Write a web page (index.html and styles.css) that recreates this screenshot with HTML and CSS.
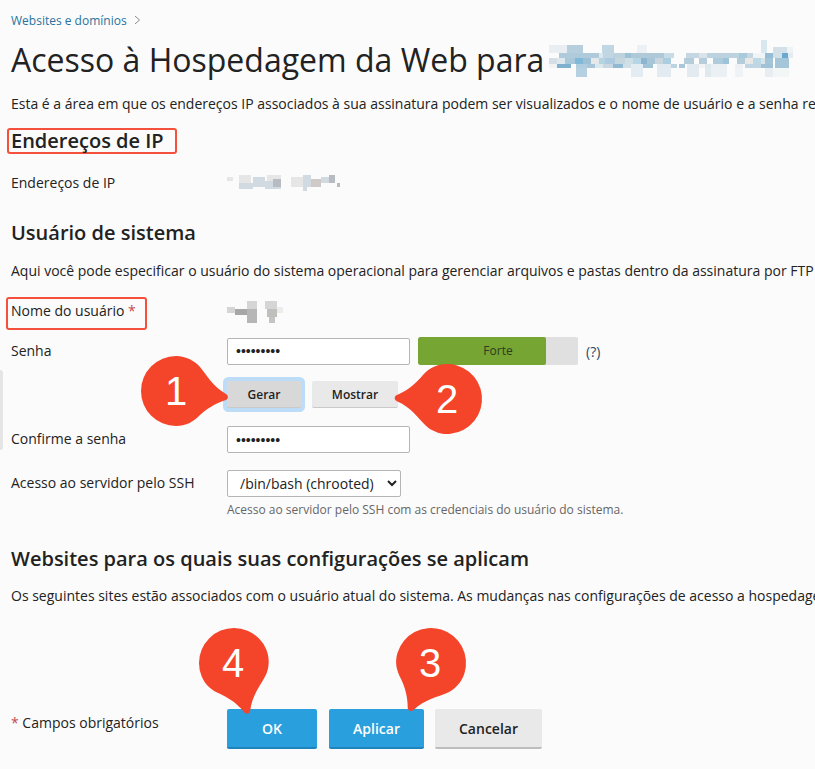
FILE: index.html
```html
<!DOCTYPE html>
<html lang="pt">
<head>
  <meta charset="UTF-8">
  <meta name="viewport" content="width=device-width, initial-scale=1">
  <title>Acesso à Hospedagem da Web</title>
  <link rel="stylesheet" href="styles.css">
</head>
<body>
  <div class="page">
    <div class="side-handle"></div>

    <nav class="breadcrumb"><a href="#">Websites e domínios</a>
      <svg class="crumb-arrow" width="7" height="10" viewBox="0 0 7 10"><path d="M1 1l4.5 4L1 9" fill="none" stroke="#8a8a8a"/></svg>
    </nav>

    <h1 class="page-title">Acesso à Hospedagem da Web para
      <svg class="mosaic-title" width="246" height="38" viewBox="0 -1 246 38" shape-rendering="crispEdges">
        <!-- dominio borrado -->
        <rect x="212" y="0" width="6" height="5" fill="#d9e8ef"/>
        <rect x="0" y="5" width="18" height="8" fill="#e8eef2"/><rect x="18" y="5" width="16" height="8" fill="#b7cfdc"/><rect x="53" y="5" width="12" height="8" fill="#c0d6e2"/><rect x="88" y="5" width="10" height="8" fill="#eef1f4"/><rect x="212" y="5" width="6" height="8" fill="#d9e8ef"/><rect x="224" y="7" width="14" height="6" fill="#d3e0e8"/><rect x="238" y="7" width="6" height="6" fill="#eef3f6"/>
        <rect x="10" y="13" width="40" height="5" fill="#afcbdb"/><rect x="50" y="13" width="4" height="5" fill="#dce8ee"/><rect x="54" y="13" width="10" height="5" fill="#c0d6e2"/><rect x="64" y="13" width="12" height="5" fill="#bed2dd"/><rect x="76" y="13" width="6" height="5" fill="#9cc2d8"/><rect x="82" y="13" width="33" height="5" fill="#b0c9d8"/><rect x="115" y="13" width="10" height="5" fill="#c8dce6"/><rect x="137" y="13" width="13" height="5" fill="#c5d7e2"/><rect x="150" y="13" width="8" height="5" fill="#d9e3e9"/><rect x="158" y="13" width="32" height="5" fill="#bdd2df"/><rect x="190" y="13" width="8" height="5" fill="#a9c9dc"/><rect x="198" y="13" width="6" height="5" fill="#c5d6e0"/><rect x="204" y="13" width="12" height="5" fill="#f0f4f7"/><rect x="216" y="13" width="8" height="5" fill="#95bed4"/><rect x="224" y="13" width="14" height="5" fill="#d3e0e8"/><rect x="233" y="13" width="6" height="5" fill="#6aa9cf"/><rect x="239" y="13" width="5" height="5" fill="#e3ecf1"/>
        <rect x="0" y="18" width="8" height="6" fill="#d5dfe5"/><rect x="8" y="18" width="8" height="6" fill="#dfe8ec"/><rect x="16" y="18" width="10" height="6" fill="#a9c9db"/><rect x="26" y="18" width="8" height="6" fill="#7fb8d8"/><rect x="34" y="18" width="8" height="6" fill="#9dc0d4"/><rect x="42" y="18" width="8" height="6" fill="#e6e9ea"/><rect x="50" y="18" width="6" height="6" fill="#b5d4e3"/><rect x="56" y="18" width="10" height="6" fill="#aecade"/><rect x="66" y="18" width="10" height="6" fill="#c5d6df"/><rect x="76" y="18" width="8" height="6" fill="#cfdfe6"/><rect x="84" y="18" width="8" height="6" fill="#b5d6e5"/><rect x="92" y="18" width="6" height="6" fill="#8db5d0"/><rect x="98" y="18" width="8" height="6" fill="#a9c6d8"/><rect x="106" y="18" width="8" height="6" fill="#c9d6de"/><rect x="114" y="18" width="8" height="6" fill="#aacde0"/><rect x="135" y="18" width="10" height="6" fill="#b5cdda"/><rect x="150" y="18" width="8" height="6" fill="#b7cddc"/><rect x="164" y="18" width="10" height="6" fill="#aecbdc"/><rect x="174" y="18" width="6" height="6" fill="#9ec2d7"/><rect x="188" y="18" width="8" height="6" fill="#b3cddb"/><rect x="196" y="18" width="8" height="6" fill="#e8e8e8"/><rect x="204" y="18" width="8" height="6" fill="#bcd9e6"/><rect x="212" y="18" width="4" height="6" fill="#d8e4ea"/><rect x="216" y="18" width="8" height="6" fill="#a2c5d8"/><rect x="226" y="18" width="14" height="6" fill="#a5c6d9"/>
        <rect x="0" y="24" width="8" height="4" fill="#f2f3f4"/><rect x="8" y="24" width="14" height="4" fill="#7fb0cd"/><rect x="27" y="24" width="11" height="4" fill="#b0cddf"/><rect x="38" y="24" width="8" height="4" fill="#a7c6da"/><rect x="46" y="24" width="8" height="4" fill="#dbe9ee"/><rect x="54" y="24" width="10" height="4" fill="#c9d8e0"/><rect x="64" y="24" width="10" height="4" fill="#92b9d2"/><rect x="74" y="24" width="8" height="4" fill="#d1dfe7"/><rect x="82" y="24" width="12" height="4" fill="#e2ecf2"/><rect x="94" y="24" width="10" height="4" fill="#a0c3d8"/><rect x="108" y="24" width="14" height="4" fill="#e0eaf0"/><rect x="122" y="24" width="6" height="4" fill="#bcd4e0"/><rect x="130" y="24" width="6" height="4" fill="#a8c7da"/><rect x="138" y="24" width="12" height="4" fill="#e3ebf1"/><rect x="150" y="24" width="6" height="4" fill="#f1f4f6"/><rect x="156" y="24" width="6" height="4" fill="#dfe8ee"/><rect x="162" y="24" width="16" height="4" fill="#e9eff2"/><rect x="186" y="24" width="8" height="4" fill="#eef1f4"/><rect x="196" y="24" width="16" height="4" fill="#c0d6e2"/><rect x="212" y="24" width="12" height="4" fill="#9fc2d6"/><rect x="226" y="24" width="14" height="4" fill="#a5c6d9"/>
        <rect x="27" y="28" width="11" height="9" fill="#b5d0e0"/><rect x="82" y="28" width="12" height="9" fill="#e2ecf2"/><rect x="108" y="28" width="14" height="9" fill="#e2ebf1"/><rect x="138" y="28" width="12" height="9" fill="#e3ebf1"/><rect x="156" y="28" width="6" height="9" fill="#e0e9ee"/><rect x="162" y="28" width="16" height="9" fill="#eaf0f3"/><rect x="186" y="28" width="8" height="9" fill="#f0f3f5"/><rect x="216" y="28" width="8" height="9" fill="#e8edf1"/><rect x="224" y="28" width="16" height="9" fill="#f3f6f7"/>
      </svg>
    </h1>
    <p class="intro">Esta é a área em que os endereços IP associados à sua assinatura podem ser visualizados e o nome de usuário e a senha relacionados</p>

    <h2 class="heading heading-marked">Endereços de IP</h2>
    <div class="field field-ip">
      <span class="field-label">Endereços de IP</span>
      <svg class="mosaic" width="116" height="20" viewBox="0 0 116 20" shape-rendering="crispEdges">
        <g fill="#e6e6e6"><rect x="0" y="4" width="6" height="4"/><rect x="12" y="2" width="12" height="8"/><rect x="40" y="2" width="14" height="6"/><rect x="64" y="4" width="12" height="10"/></g>
        <g fill="#d2dae1"><rect x="12" y="10" width="14" height="6"/><rect x="26" y="4" width="12" height="10"/><rect x="38" y="8" width="16" height="8"/><rect x="76" y="2" width="8" height="12"/><rect x="94" y="4" width="8" height="6"/></g>
        <g fill="#b6bcc1"><rect x="46" y="6" width="8" height="8"/><rect x="102" y="2" width="6" height="8"/><rect x="110" y="10" width="3" height="4"/></g>
        <g fill="#cfc9c7"><rect x="84" y="6" width="10" height="8"/><rect x="76" y="14" width="4" height="4" fill="#d2dae1"/></g>
      </svg>
    </div>

    <h2 class="heading heading-system">Usuário de sistema</h2>
    <p class="intro intro-system">Aqui você pode especificar o usuário do sistema operacional para gerenciar arquivos e pastas dentro da assinatura por FTP</p>

    <div class="field field-user">
      <span class="field-label label-marked">Nome do usuário <span class="req">*</span></span>
      <svg class="mosaic mosaic-user" width="60" height="24" viewBox="0 0 60 24" shape-rendering="crispEdges">
        <g fill="#d5d5d5"><rect x="0" y="6" width="8" height="6"/><rect x="20" y="0" width="10" height="8"/><rect x="38" y="0" width="12" height="8"/><rect x="50" y="6" width="6" height="6" fill="#ececec"/></g>
        <g fill="#a8a6a6"><rect x="8" y="8" width="12" height="6"/><rect x="20" y="8" width="10" height="14" fill="#b6b6b6"/><rect x="40" y="8" width="10" height="8" fill="#bfbfbb"/><rect x="42" y="16" width="6" height="6" fill="#c4c4c4"/></g>
      </svg>
    </div>

    <div class="field field-pass">
      <span class="field-label">Senha</span>
      <div class="pass-line">
        <input class="text-input" type="password" value="123456789">
        <div class="strength"><div class="strength-fill" style="width: 80%"></div><span class="strength-text">Forte</span></div>
        <a class="hint-link" href="#">(?)</a>
      </div>
    </div>
    <div class="pass-buttons">
      <button class="btn btn-focus" type="button">Gerar</button>
      <button class="btn" type="button">Mostrar</button>
    </div>

    <div class="field field-confirm">
      <span class="field-label">Confirme a senha</span>
      <input class="text-input" type="password" value="123456789">
    </div>

    <div class="field field-ssh">
      <span class="field-label">Acesso ao servidor pelo SSH</span>
      <div>
        <select class="select-input"><option>/bin/bash (chrooted)</option></select>
        <p class="field-hint">Acesso ao servidor pelo SSH com as credenciais do usuário do sistema.</p>
      </div>
    </div>

    <h2 class="heading heading-sites">Websites para os quais suas configurações se aplicam</h2>
    <p class="intro intro-sites">Os seguintes sites estão associados com o usuário atual do sistema. As mudanças nas configurações de acesso a hospedagem</p>

    <div class="form-footer">
      <span class="required-note"><span class="req">*</span> Campos obrigatórios</span>
      <div class="footer-buttons">
        <button class="btn btn-big btn-primary btn-ok" type="button">OK</button>
        <button class="btn btn-big btn-primary btn-apply" type="button">Aplicar</button>
        <button class="btn btn-big btn-cancel" type="button">Cancelar</button>
      </div>
    </div>

    <!-- marcadores por cima da tela -->
    <svg class="callout callout-1" width="130" height="130" viewBox="-65 -65 130 130">
      <path class="drop" transform="rotate(0)" d="M0-35C10-35 19-30 24-24 31-16 36-5 50 3 53 5 52 8 50 9 44 11 35 14 24 24 17 31 10 35 0 35A35 35 0 0 1 0-35Z"/>
      <text x="0" y="14">1</text>
    </svg>
    <svg class="callout callout-2" width="130" height="130" viewBox="-65 -65 130 130">
      <path class="drop" transform="rotate(174)" d="M0-35C10-35 19-30 24-24 31-16 36-5 50 3 53 5 52 8 50 9 44 11 35 14 24 24 17 31 10 35 0 35A35 35 0 0 1 0-35Z"/>
      <text x="0" y="14">2</text>
    </svg>
    <svg class="callout callout-3" width="130" height="130" viewBox="-65 -65 130 130">
      <path class="drop" transform="rotate(107)" d="M0-35C10-35 19-30 24-24 31-16 36-5 50 3 53 5 52 8 50 9 44 11 35 14 24 24 17 31 10 35 0 35A35 35 0 0 1 0-35Z"/>
      <text x="-1" y="14">3</text>
    </svg>
    <svg class="callout callout-4" width="130" height="130" viewBox="-65 -65 130 130">
      <path class="drop" transform="rotate(67.7)" d="M0-35C10-35 19-30 24-24 31-16 36-5 50 3 53 5 52 8 50 9 44 11 35 14 24 24 17 31 10 35 0 35A35 35 0 0 1 0-35Z"/>
      <text x="-1" y="14">4</text>
    </svg>
  </div>
</body>
</html>
```

FILE: styles.css
```css
html, body {
  margin: 0;
  height: 100%;
  overflow: hidden;
}
body {
  font-family: "Open Sans", Arial, sans-serif;
  font-size: 14px;
  color: #222;
  background: #fbfbfb;
}
.page {
  position: relative;
  height: 769px;
  padding: 13px 0 0 11px;
  box-sizing: border-box;
  white-space: nowrap;
  overflow: hidden;
}
.side-handle {
  position: absolute;
  left: 0;
  top: 370px;
  width: 3px;
  height: 80px;
  background: #e5e5e5;
  border-radius: 0 3px 3px 0;
}

/* topo */
.breadcrumb {
  font-size: 12px;
  line-height: 16px;
}
.breadcrumb a {
  color: #28739e;
  text-decoration: none;
}
.crumb-arrow {
  margin-left: 4px;
}
.page-title {
  display: flex;
  align-items: center;
  margin: 9px 0 0;
  font-size: 32px;
  font-weight: 400;
  line-height: 44px;
  color: #222;
}
.mosaic-title {
  margin: 0 0 4px 5px;
  flex: none;
}
.intro {
  margin: 0;
  line-height: 20px;
}
.page-title + .intro {
  margin-top: 12px;
}
.heading {
  margin: 0;
  font-size: 20px;
  font-weight: 600;
  line-height: 26px;
}
.heading-marked {
  width: 164px;
  height: 22px;
  margin: 14px 0 0 -4px;
  padding-left: 2px;
  border: 2px solid #f4503c;
  border-radius: 3px;
  line-height: 22px;
}
.heading-system {
  margin-top: 27px;
}
.intro-system {
  margin-top: 15px;
}
.heading-sites {
  margin-top: 28px;
}
.intro-sites {
  margin-top: 14px;
}

/* campos */
.field {
  display: grid;
  grid-template-columns: 216px 1fr;
  align-items: start;
}
.field-label {
  line-height: 20px;
}
.field-ip {
  margin-top: 19px;
}
.field-user {
  margin-top: 18px;
}
.label-marked {
  width: 134px;
  height: 29px;
  margin: -2px 0 0 -5px;
  padding-left: 3px;
  border: 2px solid #f4503c;
  border-radius: 3px;
  line-height: 24px;
}
.req {
  color: #c8474e;
}
.mosaic {
  display: block;
}
.mosaic-user {
  margin-top: 2px;
}
.field-pass {
  margin-top: 7px;
}
.field-pass .field-label {
  padding-top: 4px;
}
.pass-line {
  display: flex;
  align-items: center;
}
.text-input {
  box-sizing: border-box;
  width: 183px;
  height: 27px;
  padding: 0 8px;
  border: 1px solid #b5b5b5;
  border-radius: 2px;
  background: #fff;
  font-size: 14px;
  color: #222;
}
.strength {
  position: relative;
  width: 160px;
  height: 28px;
  margin-left: 8px;
  border-radius: 2px;
  background: #e0e0e0;
  overflow: hidden;
}
.strength-fill {
  height: 100%;
  background: #76a533;
  border-radius: 2px;
}
.strength-text {
  position: absolute;
  inset: 0;
  text-align: center;
  font-size: 12px;
  line-height: 28px;
  color: #2f3a1e;
}
.hint-link {
  margin-left: 8px;
  font-size: 14px;
  color: #2b4a66;
  text-decoration: none;
}
.pass-buttons {
  display: flex;
  align-items: center;
  gap: 11px;
  margin: 16px 0 0 216px;
}
.btn {
  height: 27px;
  padding: 0;
  border: 0;
  border-bottom: 1px solid #c9c9c9;
  border-radius: 2px;
  background: #e9e9e9;
  font-family: inherit;
  font-size: 12px;
  font-weight: 600;
  color: #222;
}
.pass-buttons .btn {
  width: 86px;
}
.pass-buttons .btn-focus {
  width: 74px;
  background: #d8d8d8;
  box-shadow: 0 0 0 4px #bcdcf8;
}
.field-confirm {
  margin-top: 18px;
}
.field-confirm .field-label {
  padding-top: 3px;
}
.field-ssh {
  margin-top: 17px;
}
.field-ssh .field-label {
  padding-top: 3px;
}
.select-input {
  display: block;
  width: 174px;
  height: 27px;
  padding: 0 0 0 8px;
  border: 1px solid #b5b5b5;
  border-radius: 2px;
  background: #fff;
  font-family: inherit;
  font-size: 14px;
  color: #222;
}
.field-hint {
  margin: 5px 0 0;
  font-size: 12px;
  line-height: 16px;
  color: #666;
}

/* rodape do formulario */
.form-footer {
  display: grid;
  grid-template-columns: 216px 1fr;
  align-items: center;
  margin-top: 103px;
}
.required-note {
  margin-top: -13px;
  font-size: 14px;
}
.footer-buttons {
  display: flex;
  gap: 11px;
}
.btn-big {
  height: 40px;
  border-bottom-width: 2px;
  font-size: 14px;
}
.btn-primary {
  background: #2a9fdd;
  border-bottom-color: #1e84bb;
  color: #fff;
}
.btn-ok {
  width: 90px;
}
.btn-apply {
  width: 95px;
  margin-left: 1px;
}
.btn-cancel {
  width: 107px;
  border-bottom-color: #bdbdbd;
}

/* marcadores */
.callout {
  position: absolute;
}
.callout .drop {
  fill: #f4442a;
}
.callout text {
  font-family: "Liberation Sans", Arial, sans-serif;
  font-size: 40px;
  text-anchor: middle;
  fill: #fff;
}
.callout-1 {
  left: 111px;
  top: 326px;
}
.callout-2 {
  left: 382px;
  top: 334px;
}
.callout-3 {
  left: 366px;
  top: 598px;
}
.callout-4 {
  left: 169px;
  top: 598px;
}
```
